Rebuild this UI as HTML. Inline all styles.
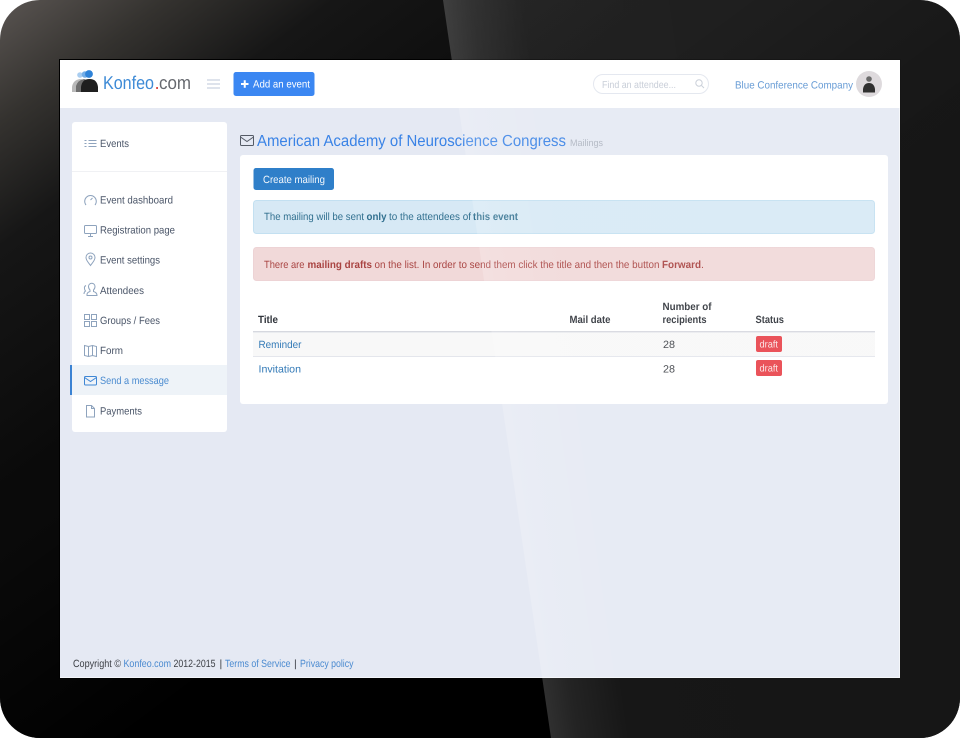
<!DOCTYPE html>
<html><head><meta charset="utf-8"><title>Konfeo.com - Mailings</title>
<style>
html,body{margin:0;padding:0;background:#fff;width:960px;height:738px;overflow:hidden}
svg{display:block}
text{font-family:"Liberation Sans",sans-serif;font-size:10.5px;fill:#47536a;text-rendering:geometricPrecision;white-space:pre}
.b{font-weight:700}
.i{fill:none;stroke:#8ea3bd;stroke-width:1}
.n{fill:#4a5568}
.l{fill:#337ab7}
.t{fill:#31708f}
.d{fill:#a94442}
.h{fill:#2f333a;font-weight:700}
.f{fill:#3c3f45}
</style></head><body>
<svg width="960" height="738" viewBox="0 0 960 738" xmlns="http://www.w3.org/2000/svg">
<defs>
<linearGradient id="bz" gradientUnits="userSpaceOnUse" x1="0" y1="0" x2="236" y2="320">
<stop offset="0" stop-color="#5a5552"/><stop offset=".25" stop-color="#34322f"/><stop offset=".5" stop-color="#161616"/><stop offset=".75" stop-color="#101010"/><stop offset="1" stop-color="#0a0a0a"/>
</linearGradient>
<linearGradient id="bz2" gradientUnits="userSpaceOnUse" x1="0" y1="0" x2="400" y2="540">
<stop offset="0" stop-color="#000" stop-opacity="0"/><stop offset=".65" stop-color="#000" stop-opacity="0"/><stop offset="1" stop-color="#000"/>
</linearGradient>
<linearGradient id="gl" gradientUnits="userSpaceOnUse" x1="443" y1="0" x2="839" y2="-57">
<stop offset="0" stop-color="#fff" stop-opacity=".19"/><stop offset=".07" stop-color="#fff" stop-opacity=".14"/><stop offset=".2" stop-color="#fff" stop-opacity=".09"/><stop offset="1" stop-color="#fff" stop-opacity=".085"/>
</linearGradient>
</defs>

<!-- bezel -->
<rect x="0" y="0" width="960" height="738" rx="40" fill="url(#bz)"/>
<rect x="0" y="0" width="960" height="738" rx="40" fill="url(#bz2)"/>
<rect x="59" y="59" width="842" height="620" fill="#000"/>

<!-- screen -->
<rect x="60" y="60" width="840" height="618" fill="#e5e9f3"/>
<rect x="60" y="60" width="840" height="48" fill="#fff"/>

<!-- logo -->
<circle cx="80" cy="75" r="2.8" fill="#a9cdf0"/>
<circle cx="85" cy="74.5" r="3.3" fill="#73aee8"/>
<circle cx="89" cy="74" r="3.9" fill="#2f83d8"/>
<path d="M72 92V87Q73 80 80 79Q85 79 88 84V92Z" fill="#b9b9b9"/>
<path d="M76 92V86Q78 80 84 79Q89 80 90 84V92Z" fill="#6e6e6e"/>
<path d="M81 92V87Q82 79 89.500 79Q97 79 98 87V92Z" fill="#1f1f1f"/>
<text x="103" y="89" style="font-size:18.500px;fill:#3d8ad6" textLength="51" lengthAdjust="spacingAndGlyphs">Konfeo</text>
<text x="154.500" y="89" style="font-size:18.500px;fill:#d9433f">.</text>
<text x="159" y="89" style="font-size:18.500px;fill:#66696f" textLength="32" lengthAdjust="spacingAndGlyphs">com</text>
<path d="M207 80h13M207 84h13M207 88h13" stroke="#d3dae5" stroke-width="1.500" fill="none"/>
<rect x="233.500" y="72" width="81" height="24" rx="2.500" fill="#3b87f2"/>
<path d="M241 84h7.500M244.750 80.250v7.500" stroke="#fff" stroke-width="2" fill="none"/>
<text x="253" y="87.500" style="fill:#fff" textLength="57" lengthAdjust="spacingAndGlyphs">Add an event</text>

<!-- search / user -->
<rect x="593.500" y="74.500" width="115" height="19" rx="9.500" fill="#fff" stroke="#e2e6ee"/>
<text x="602" y="88" style="font-size:10px;fill:#c3c9d4" textLength="74" lengthAdjust="spacingAndGlyphs">Find an attendee...</text>
<circle cx="699" cy="83" r="3.200" fill="none" stroke="#c6ccd6"/><path d="M701.500 85.500l2.500 2.500" stroke="#c6ccd6"/>
<text x="735" y="88.500" style="fill:#5b94d2" textLength="118" lengthAdjust="spacingAndGlyphs">Blue Conference Company</text>
<circle cx="869" cy="84" r="13" fill="#dbd7da"/>
<circle cx="869" cy="79" r="2.800" fill="#5c5c5c"/>
<path d="M863 92.500V89Q864 83 869 83Q874 83 875 89V92.500Z" fill="#1d1d1d"/>

<!-- sidebar -->
<rect x="72" y="122" width="155" height="310" rx="3" fill="#fff"/>
<path d="M72 171.500H227" stroke="#f0f1f4"/>
<rect x="70" y="365" width="157" height="30" fill="#eef3f8"/>
<rect x="70" y="365" width="2" height="30" fill="#3b83d3"/>

<g class="i">
<path d="M88.500 140.500h8M88.500 143.500h8M88.500 146.500h8M84.500 140.500h2M84.500 143.500h2M84.500 146.500h2"/>
<path d="M86 205a5.800 5.800 0 1 1 9 0"/><path d="M90.500 200l2-2"/>
<rect x="84.500" y="225.500" width="12" height="8" rx="1"/><path d="M88 236.500h5M90.500 233.500v3"/>
<path d="M90.500 265.500c-2-3-4.500-5-4.500-8a4.500 4.500 0 0 1 9 0c0 3-2.500 5-4.500 8z"/><circle cx="90.500" cy="257.500" r="1.500"/>
<path d="M87 295.500h10q0-3-3.500-4v-1.500q1.500-1.500 1.500-3.500a3.200 3.200 0 0 0-6.500 0q0 2 1.500 3.500v1.500q-3.500 1-3 4z"/><path d="M86 285.500q-2 1-1.500 3 0 1.500 1 2.500-1.500 1-1.500 3"/>
<rect x="84.500" y="314.500" width="5" height="5"/><rect x="91.500" y="314.500" width="5" height="5"/><rect x="84.500" y="321.500" width="5" height="5"/><rect x="91.500" y="321.500" width="5" height="5"/>
<path d="M84.500 345.500l4 1 4-1 4 1v10l-4-1-4 1-4-1zM88.500 346.500v10M92.500 345.500v10"/>
<path d="M86.500 405.500h5l3 3v8.500h-8z"/><path d="M91.500 405.500v3h3"/>
</g>
<rect x="84.500" y="376.500" width="12" height="8.500" rx="1" fill="none" stroke="#3f87d5"/>
<path d="M84.500 377.500l6 4 6-4" fill="none" stroke="#3f87d5"/>

<text x="100" y="147" class="n" textLength="29" lengthAdjust="spacingAndGlyphs">Events</text>
<text x="100" y="203.500" class="n" textLength="73" lengthAdjust="spacingAndGlyphs">Event dashboard</text>
<text x="100" y="233.500" class="n" textLength="75" lengthAdjust="spacingAndGlyphs">Registration page</text>
<text x="100" y="263.500" class="n" textLength="60" lengthAdjust="spacingAndGlyphs">Event settings</text>
<text x="100" y="294" class="n" textLength="44" lengthAdjust="spacingAndGlyphs">Attendees</text>
<text x="100" y="324" class="n" textLength="60" lengthAdjust="spacingAndGlyphs">Groups / Fees</text>
<text x="100" y="354" class="n" textLength="23" lengthAdjust="spacingAndGlyphs">Form</text>
<text x="100" y="384" style="fill:#4a8bd0" textLength="69" lengthAdjust="spacingAndGlyphs">Send a message</text>
<text x="100" y="414.500" class="n" textLength="42" lengthAdjust="spacingAndGlyphs">Payments</text>

<!-- heading -->
<rect x="240.500" y="135.500" width="13" height="10" rx="1" fill="none" stroke="#555b66"/>
<path d="M240.500 137l6.500 4.500 6.500-4.500" fill="none" stroke="#555b66"/>
<text x="257" y="146" style="font-size:16px;fill:#3a83e6" textLength="309" lengthAdjust="spacingAndGlyphs">American Academy of Neuroscience Congress</text>
<text x="570" y="146" style="font-size:9.500px;fill:#aeb4c0" textLength="33" lengthAdjust="spacingAndGlyphs">Mailings</text>

<!-- card -->
<rect x="240" y="155" width="648" height="249" rx="3" fill="#fff"/>
<rect x="253.500" y="168" width="80.500" height="22" rx="2.500" fill="#2f7fc9"/>
<text x="263" y="183" style="fill:#f2f7fc" textLength="62" lengthAdjust="spacingAndGlyphs">Create mailing</text>

<rect x="253.500" y="200.500" width="621" height="33" rx="3" fill="#d7e9f5" stroke="#c3e0f1"/>
<text x="264" y="220" class="t" textLength="100" lengthAdjust="spacingAndGlyphs">The mailing will be sent</text>
<text x="366.500" y="220" class="t b" textLength="20" lengthAdjust="spacingAndGlyphs">only</text>
<text x="389" y="220" class="t" textLength="82" lengthAdjust="spacingAndGlyphs">to the attendees of</text>
<text x="473" y="220" class="t b" textLength="45" lengthAdjust="spacingAndGlyphs">this event</text>

<rect x="253.500" y="247.500" width="621" height="33" rx="3" fill="#f1d9d9" stroke="#edd3d5"/>
<text x="264" y="268" class="d" textLength="40.500" lengthAdjust="spacingAndGlyphs">There are</text>
<text x="307.500" y="268" class="d b" textLength="64.500" lengthAdjust="spacingAndGlyphs">mailing drafts</text>
<text x="374.500" y="268" class="d" textLength="285" lengthAdjust="spacingAndGlyphs">on the list. In order to send them click the title and then the button</text>
<text x="662" y="268" class="d b" textLength="39" lengthAdjust="spacingAndGlyphs">Forward</text>
<text x="701" y="268" class="d">.</text>

<!-- table -->
<rect x="253" y="333" width="622" height="23" fill="#f8f8f8"/>
<rect x="253" y="331" width="622" height="1.500" fill="#d6d8df"/>
<rect x="253" y="356" width="622" height="1" fill="#e4e6ec"/>
<text x="258" y="323" class="h" textLength="20" lengthAdjust="spacingAndGlyphs">Title</text>
<text x="569.500" y="323" class="h" textLength="41" lengthAdjust="spacingAndGlyphs">Mail date</text>
<text x="662.500" y="310" class="h" textLength="49" lengthAdjust="spacingAndGlyphs">Number of</text>
<text x="662.500" y="323" class="h" textLength="44" lengthAdjust="spacingAndGlyphs">recipients</text>
<text x="755.500" y="323" class="h" textLength="28.500" lengthAdjust="spacingAndGlyphs">Status</text>

<text x="258.500" y="348" class="l" textLength="43" lengthAdjust="spacingAndGlyphs">Reminder</text>
<text x="663" y="348" class="f" textLength="12" lengthAdjust="spacingAndGlyphs">28</text>
<rect x="756" y="336" width="26" height="16" rx="2" fill="#e8434a"/>
<text x="759.500" y="347.500" style="font-size:10px;fill:#fbe3e4" textLength="18.500" lengthAdjust="spacingAndGlyphs">draft</text>

<text x="258.500" y="372.500" class="l" textLength="42.500" lengthAdjust="spacingAndGlyphs">Invitation</text>
<text x="663" y="372.500" class="f" textLength="12" lengthAdjust="spacingAndGlyphs">28</text>
<rect x="756" y="360" width="26" height="16" rx="2" fill="#e8434a"/>
<text x="759.500" y="371.500" style="font-size:10px;fill:#fbe3e4" textLength="18.500" lengthAdjust="spacingAndGlyphs">draft</text>

<!-- footer -->
<text x="73" y="667" class="f" textLength="48" lengthAdjust="spacingAndGlyphs">Copyright ©</text>
<text x="123.500" y="667" style="fill:#4a8ad0" textLength="47.500" lengthAdjust="spacingAndGlyphs">Konfeo.com</text>
<text x="173.500" y="667" class="f" textLength="42" lengthAdjust="spacingAndGlyphs">2012-2015</text>
<text x="219.500" y="667" class="f">|</text>
<text x="225" y="667" style="fill:#4a8ad0" textLength="65.500" lengthAdjust="spacingAndGlyphs">Terms of Service</text>
<text x="294" y="667" class="f">|</text>
<text x="300" y="667" style="fill:#4a8ad0" textLength="53.500" lengthAdjust="spacingAndGlyphs">Privacy policy</text>

<!-- screen edge -->
<path d="M60 677.500H899.500V108" fill="none" stroke="#f4f6fa"/>

<!-- glare -->
<polygon points="443,0 960,0 960,738 551,738" fill="url(#gl)"/>
</svg>
</body></html>
